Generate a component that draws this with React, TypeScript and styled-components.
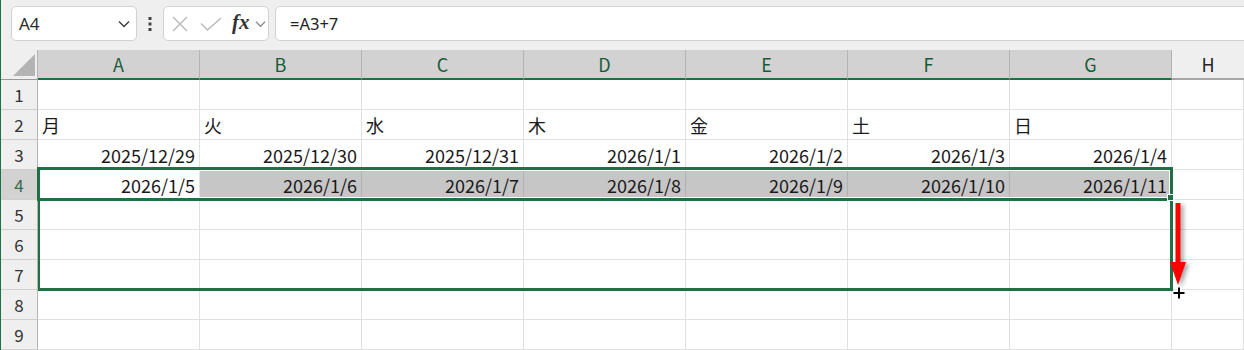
import React from 'react';
import styled, { createGlobalStyle, css } from 'styled-components';

const GREEN = '#1f7145';
const CELL_FONT = `'Noto Sans CJK JP', 'Noto Sans', sans-serif`;

const GlobalStyle = createGlobalStyle`
  html, body {
    margin: 0;
    padding: 0;
    background: #ffffff;
    overflow: hidden;
  }
`;

const Window = styled.div`
  width: 1244px;
  height: 350px;
  box-sizing: border-box;
  border-left: 1px solid ${GREEN};
  background: #ffffff;
  overflow: hidden;
`;

const Toolbar = styled.div`
  height: 50px;
  box-sizing: border-box;
  background: #efefef;
  display: flex;
  align-items: flex-start;
  padding: 6px 0 0 10px;
  font-family: 'Noto Sans', 'Open Sans', sans-serif;
`;

const Box = styled.div`
  height: 35px;
  box-sizing: border-box;
  background: #ffffff;
  border: 1px solid #d2d2d2;
  border-radius: 5px;
  display: flex;
  align-items: center;
`;

const NameBox = styled(Box)`
  width: 126px;
  padding: 0 6px 0 7px;
  justify-content: space-between;
  font-size: 17px;
  color: #2b2b2b;
`;

const Grip = styled.div`
  width: 26px;
  height: 35px;
  display: flex;
  align-items: center;
  justify-content: center;
`;

const FxBox = styled(Box)`
  width: 106px;
  padding: 0 0 0 8px;
`;

const Fx = styled.span`
  font-family: 'Liberation Serif', serif;
  font-style: italic;
  font-weight: bold;
  font-size: 21px;
  color: #333333;
  margin: -3px 5px 0 10px;
`;

const FormulaBox = styled(Box)`
  flex: 1;
  margin: 0 -20px 0 6px;
  padding-left: 14px;
  font-size: 16.5px;
  color: #222222;
`;

const Sheet = styled.div`
  position: relative;
  display: grid;
  grid-template-columns: 37px repeat(7, 162px) 1fr;
  grid-auto-rows: 30px;
`;

const Corner = styled.div`
  box-sizing: border-box;
  background: #efefef;
  border-right: 1px solid #b3b3b3;
  border-bottom: 1px solid #9a9a9a;
  display: flex;
  align-items: flex-end;
  justify-content: flex-end;
  padding: 0 2px 3px 0;
`;

const ColHead = styled.div<{ $sel?: boolean }>`
  box-sizing: border-box;
  display: flex;
  align-items: center;
  justify-content: center;
  font-family: ${CELL_FONT};
  font-size: 18px;
  padding-bottom: 1px;
  border-right: 1px solid #b3b3b3;
  ${(p) =>
    p.$sel
      ? css`
          background: #d2d2d2;
          color: #185c37;
          border-bottom: 2px solid ${GREEN};
        `
      : css`
          background: #efefef;
          color: #262626;
          border-bottom: 2px solid #a6a6a6;
          border-right: none;
        `}
`;

const RowHead = styled.div<{ $sel?: boolean }>`
  box-sizing: border-box;
  display: flex;
  align-items: center;
  justify-content: center;
  font-family: ${CELL_FONT};
  font-size: 17px;
  background: ${(p) => (p.$sel ? '#d2d2d2' : '#efefef')};
  color: ${(p) => (p.$sel ? '#3d6b4e' : '#333333')};
  border-right: 1px solid #b3b3b3;
  border-bottom: 1px solid #cfcfcf;
`;

const Cell = styled.div<{ $sel?: boolean; $align?: 'left' | 'right' }>`
  box-sizing: border-box;
  display: flex;
  align-items: center;
  justify-content: ${(p) => (p.$align === 'right' ? 'flex-end' : 'flex-start')};
  padding: 0 4px 0 4px;
  font-family: ${CELL_FONT};
  font-size: 18px;
  color: #1a1a1a;
  background: ${(p) => (p.$sel ? '#c6c6c6' : '#ffffff')};
  border-right: 1px solid ${(p) => (p.$sel ? '#b1b1b1' : '#e1e1e1')};
  border-bottom: 1px solid #e1e1e1;
  white-space: nowrap;
`;

const Selection = styled.div`
  position: absolute;
  left: 36px;
  top: 117px;
  width: 1136px;
  height: 34px;
  box-sizing: border-box;
  border: 3px solid ${GREEN};
  box-shadow: inset 0 0 0 1px #ffffff;
  pointer-events: none;
`;

const FillPreview = styled.div`
  position: absolute;
  left: 37px;
  top: 148px;
  width: 1135px;
  height: 93px;
  box-sizing: border-box;
  border-style: solid;
  border-color: ${GREEN};
  border-width: 0 3px 3px 2px;
  pointer-events: none;
`;

const FillHandle = styled.div`
  position: absolute;
  left: 1166px;
  top: 144px;
  width: 7px;
  height: 7px;
  box-sizing: border-box;
  background: ${GREEN};
  border: 1px solid #ffffff;
`;

const Overlay = styled.svg<{ $x: number; $y: number }>`
  position: absolute;
  left: ${(p) => p.$x}px;
  top: ${(p) => p.$y}px;
  overflow: visible;
  pointer-events: none;
`;

const Chevron = ({ w = 12, color = '#444' }: { w?: number; color?: string }) => (
  <svg width={w} height={8} viewBox="0 0 12 8">
    <polyline points="1,1.5 6,6.5 11,1.5" fill="none" stroke={color} strokeWidth="1.3" />
  </svg>
);

const cols = ['A', 'B', 'C', 'D', 'E', 'F', 'G'];
const days = ['月', '火', '水', '木', '金', '土', '日'];
const row3 = ['2025/12/29', '2025/12/30', '2025/12/31', '2026/1/1', '2026/1/2', '2026/1/3', '2026/1/4'];
const row4 = ['2026/1/5', '2026/1/6', '2026/1/7', '2026/1/8', '2026/1/9', '2026/1/10', '2026/1/11'];

export default function App() {
  const rows = [1, 2, 3, 4, 5, 6, 7, 8, 9];

  const cellFor = (r: number, c: number) => {
    if (r === 2) return <Cell key={c}>{days[c]}</Cell>;
    if (r === 3) return <Cell key={c} $align="right">{row3[c]}</Cell>;
    if (r === 4)
      return (
        <Cell key={c} $align="right" $sel={c > 0}>
          {row4[c]}
        </Cell>
      );
    return <Cell key={c} />;
  };

  return (
    <>
      <GlobalStyle />
      <Window>
        <Toolbar>
          <NameBox>
            <span>A4</span>
            <Chevron w={12} color="#3a3a3a" />
          </NameBox>
          <Grip>
            <svg width="4" height="14" viewBox="0 0 4 14">
              <rect x="0.5" y="0" width="3" height="3" fill="#444" />
              <rect x="0.5" y="5.5" width="3" height="3" fill="#444" />
              <rect x="0.5" y="11" width="3" height="3" fill="#444" />
            </svg>
          </Grip>
          <FxBox>
            <svg width="16" height="16" viewBox="0 0 16 16">
              <path d="M1 1 L15 15 M15 1 L1 15" stroke="#b9b9b9" strokeWidth="1.4" fill="none" />
            </svg>
            <svg width="22" height="14" viewBox="0 0 22 14" style={{ marginLeft: 12 }}>
              <polyline points="1,6.5 7.5,13 21,1" stroke="#b9b9b9" strokeWidth="1.4" fill="none" />
            </svg>
            <Fx>fx</Fx>
            <Chevron w={11} color="#8a8a8a" />
          </FxBox>
          <FormulaBox>=A3+7</FormulaBox>
        </Toolbar>

        <Sheet>
          <Corner>
            <svg width="22" height="22" viewBox="0 0 22 22">
              <polygon points="22,0 22,22 0,22" fill="#b4b4b4" />
            </svg>
          </Corner>
          {cols.map((c) => (
            <ColHead key={c} $sel>
              {c}
            </ColHead>
          ))}
          <ColHead>H</ColHead>

          {rows.map((r) => (
            <React.Fragment key={r}>
              <RowHead $sel={r === 4}>{r}</RowHead>
              {cols.map((_, c) => cellFor(r, c))}
              <Cell />
            </React.Fragment>
          ))}

          <FillPreview />
          <Selection />
          <FillHandle />

          <Overlay $x={1165} $y={150} width="26" height="90" viewBox="0 0 26 90"
            style={{ filter: 'drop-shadow(3px 2px 2px rgba(0,0,0,0.35))' }}>
            <rect x="9.5" y="3" width="5" height="62" fill="#ff0000" />
            <polygon points="4,62 20,62 12,85" fill="#ff0000" />
          </Overlay>

          <Overlay $x={1171} $y={236} width="14" height="14" viewBox="0 0 14 14">
            <path d="M7 1 V13 M1 7 H13" stroke="#ffffff" strokeWidth="4" />
            <path d="M7 1.5 V12.5 M1.5 7 H12.5" stroke="#000000" strokeWidth="2" />
          </Overlay>
        </Sheet>
      </Window>
    </>
  );
}
